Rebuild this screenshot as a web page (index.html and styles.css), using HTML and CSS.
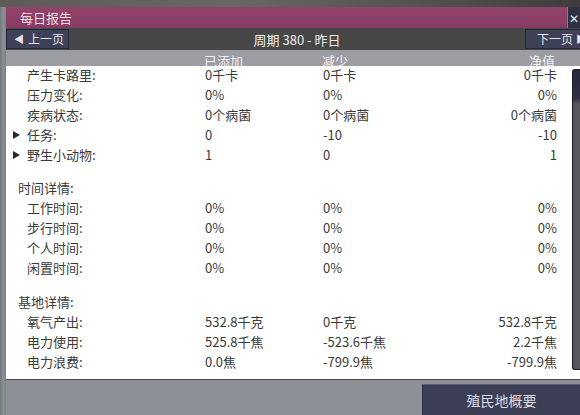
FILE: index.html
```html
<!DOCTYPE html>
<html lang="zh">
<head>
<meta charset="utf-8">
<title>每日报告</title>
<link rel="stylesheet" href="styles.css">
</head>
<body>
<div class="screen">
  <div class="topstrip"></div>
  <div class="window">
    <div class="titlebar">
      <div class="title">每日报告</div>
      <div class="close">✕</div>
    </div>
    <div class="navbar">
      <div class="navbtn prev"><span class="tri">◀</span>上一页</div>
      <div class="cycle">周期 380 - 昨日</div>
      <div class="navbtn next">下一页<span class="tri">▶</span></div>
    </div>
    <div class="colhead">
      <div class="hgrid">
        <span></span><span>已添加</span><span>减少</span><span class="r">净值</span>
      </div>
    </div>
    <div class="content">
      <div class="list">
        <div class="group first">
          <div class="row"><span class="lbl">产生卡路里:</span><span>0千卡</span><span>0千卡</span><span class="r">0千卡</span></div>
          <div class="row"><span class="lbl">压力变化:</span><span>0%</span><span>0%</span><span class="r">0%</span></div>
          <div class="row"><span class="lbl">疾病状态:</span><span>0个病菌</span><span>0个病菌</span><span class="r">0个病菌</span></div>
          <div class="row"><span class="lbl exp"><i class="arrow"></i>任务:</span><span>0</span><span>-10</span><span class="r">-10</span></div>
          <div class="row"><span class="lbl exp"><i class="arrow"></i>野生小动物:</span><span>1</span><span>0</span><span class="r">1</span></div>
        </div>
        <div class="group">
          <div class="section">时间详情:</div>
          <div class="row"><span class="lbl">工作时间:</span><span>0%</span><span>0%</span><span class="r">0%</span></div>
          <div class="row"><span class="lbl">步行时间:</span><span>0%</span><span>0%</span><span class="r">0%</span></div>
          <div class="row"><span class="lbl">个人时间:</span><span>0%</span><span>0%</span><span class="r">0%</span></div>
          <div class="row"><span class="lbl">闲置时间:</span><span>0%</span><span>0%</span><span class="r">0%</span></div>
        </div>
        <div class="group g3">
          <div class="section">基地详情:</div>
          <div class="row"><span class="lbl">氧气产出:</span><span>532.8千克</span><span>0千克</span><span class="r">532.8千克</span></div>
          <div class="row"><span class="lbl">电力使用:</span><span>525.8千焦</span><span>-523.6千焦</span><span class="r">2.2千焦</span></div>
          <div class="row"><span class="lbl">电力浪费:</span><span>0.0焦</span><span>-799.9焦</span><span class="r">-799.9焦</span></div>
        </div>
      </div>
      <div class="scrolltrack"><div class="thumb"></div></div>
    </div>
    <div class="footer">
      <div class="summary">殖民地概要</div>
    </div>
  </div>
</div>
</body>
</html>
```
FILE: styles.css
```css
html, body {
  margin: 0;
  padding: 0;
}
body {
  width: 580px;
  height: 415px;
  overflow: hidden;
  font-family: "Noto Sans CJK SC", "Noto Sans", sans-serif;
  font-size: 13px;
}
.screen {
  width: 580px;
  height: 415px;
  display: flex;
  flex-direction: column;
  background: linear-gradient(90deg, #6f7578 0px, #8a9093 3px, #7c8285 6px);
}
.topstrip {
  height: 7px;
  background: linear-gradient(90deg, #5e5a58, #6b6664 40%, #4f4c4b 80%, #3e3c3c);
}
.window {
  margin-left: 6px;
  flex: 1;
  display: flex;
  flex-direction: column;
}
.titlebar {
  height: 21px;
  display: flex;
  align-items: stretch;
}
.title {
  flex: 1;
  background: linear-gradient(180deg, #92436b, #883b62);
  color: #ecdce4;
  padding-left: 14px;
  line-height: 21px;
  font-size: 13px;
  margin-right: 1px;
}
.close {
  width: 12px;
  background: #2e3144;
  color: #e8e8ee;
  font-size: 12px;
  line-height: 21px;
  text-indent: 1px;
  overflow: hidden;
}
.navbar {
  height: 22px;
  background: #474747;
  display: flex;
  align-items: center;
  justify-content: space-between;
}
.navbtn {
  height: 20px;
  box-sizing: border-box;
  background: #3d4057;
  border: 1px solid #24263a;
  color: #e4e4ea;
  font-size: 12px;
  line-height: 18px;
  display: flex;
  align-items: center;
  white-space: nowrap;
  overflow: hidden;
  flex-shrink: 0;
}
.navbtn.prev {
  width: 63px;
  padding-left: 7px;
}
.navbtn.prev .tri {
  margin-right: 4px;
  font-size: 10px;
}
.navbtn.next {
  width: 55px;
  padding-left: 11px;
  border-right: none;
}
.navbtn.next .tri {
  margin-left: 3px;
  font-size: 10px;
}
.cycle {
  color: #eeeeee;
  font-size: 13px;
}
.colhead {
  height: 16px;
  background: #9b9da3;
  overflow: hidden;
}
.hgrid {
  display: grid;
  grid-template-columns: 198px 118px 1fr 100px;
  width: 549px;
  color: #f0f0f2;
  font-size: 13px;
  line-height: 16px;
  padding-top: 3px;
}
.content {
  height: 314px;
  background: #ffffff;
  display: flex;
  border-bottom: 1px solid #4a4a4e;
  box-sizing: border-box;
}
.list {
  width: 566px;
  color: #3a3a3a;
}
.group {
  margin-top: 13px;
}
.group.first {
  margin-top: -1px;
}
.group.g3 {
  margin-top: 14px;
}
.row, .section {
  height: 20px;
  line-height: 20px;
}
.row {
  display: grid;
  grid-template-columns: 199px 118px 1fr 100px;
  width: 551px;
}
.section {
  padding-left: 12px;
}
.lbl {
  padding-left: 21px;
  position: relative;
}
.arrow {
  position: absolute;
  left: 7px;
  top: 6px;
  width: 0;
  height: 0;
  border-top: 4px solid transparent;
  border-bottom: 4px solid transparent;
  border-left: 7px solid #2a2a2a;
}
.r {
  text-align: right;
}
.scrolltrack {
  flex: 1;
  padding-top: 3px;
  padding-bottom: 9px;
  display: flex;
}
.thumb {
  flex: 1;
  background: linear-gradient(180deg, #272a3c 0px, #2e3144 28px, #55565e 34px, #55565e 100%);
  border: 1px solid #1c1c22;
  border-right: none;
  border-radius: 3px 0 0 3px;
}
.footer {
  flex: 1;
  background: #8e9098;
  display: flex;
  justify-content: flex-end;
  align-items: flex-end;
}
.summary {
  width: 158px;
  height: 31px;
  box-sizing: border-box;
  background: #3b3e55;
  border-top: 1px solid #5b5e74;
  border-left: 1px solid #2c2e40;
  color: #dcdce4;
  font-size: 14px;
  line-height: 30px;
  text-align: center;
}
```
